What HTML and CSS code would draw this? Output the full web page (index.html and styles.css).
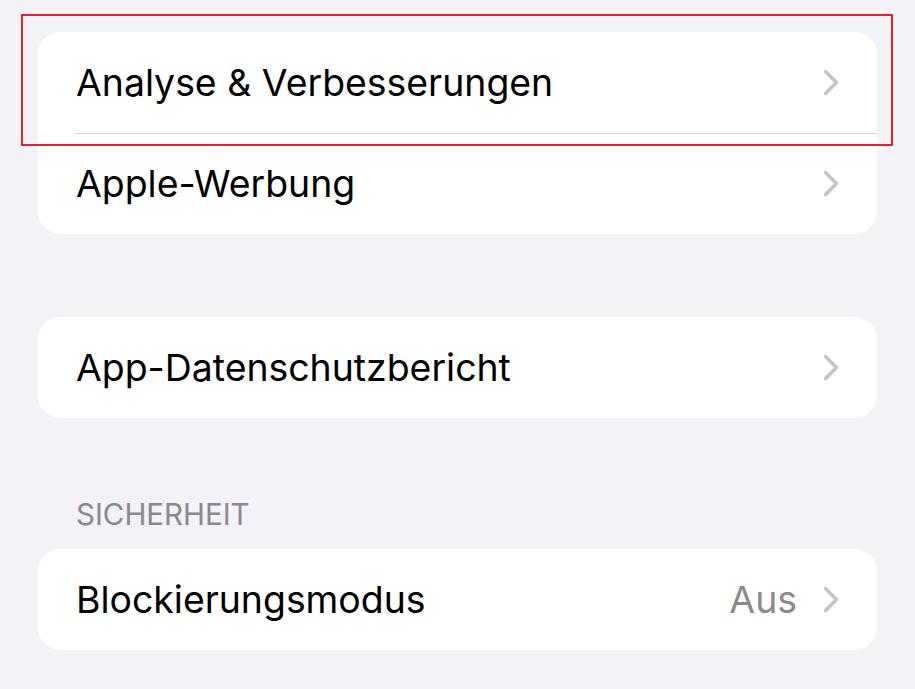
FILE: index.html
```html
<!DOCTYPE html>
<html lang="de">
<head>
  <meta charset="UTF-8" />
  <meta name="viewport" content="width=device-width, initial-scale=1.0" />
  <title>Datenschutz &amp; Sicherheit</title>
  <link rel="stylesheet" href="styles.css">
</head>
<body>
  <!-- Markierung um die erste Zeile -->
  <div class="highlight"></div>

  <div class="group">
    <div class="row">
      <span class="label">Analyse &amp; Verbesserungen</span>
      <svg class="chevron" viewBox="0 0 16 27"><path d="M2.5 2.5 L13.5 13.5 L2.5 24.5" /></svg>
    </div>
    <div class="row">
      <span class="label">Apple-Werbung</span>
      <svg class="chevron" viewBox="0 0 16 27"><path d="M2.5 2.5 L13.5 13.5 L2.5 24.5" /></svg>
    </div>
  </div>

  <div class="group">
    <div class="row">
      <span class="label">App-Datenschutzbericht</span>
      <svg class="chevron" viewBox="0 0 16 27"><path d="M2.5 2.5 L13.5 13.5 L2.5 24.5" /></svg>
    </div>
  </div>

  <div class="section-title">SICHERHEIT</div>
  <div class="group">
    <div class="row">
      <span class="label">Blockierungsmodus</span>
      <span class="value">Aus</span>
      <svg class="chevron" viewBox="0 0 16 27"><path d="M2.5 2.5 L13.5 13.5 L2.5 24.5" /></svg>
    </div>
  </div>
</body>
</html>
```

FILE: styles.css
```css
/* Grundlayout im Stil der iOS-Einstellungen */
body {
  margin: 0;
  padding: 32px 38px 0 38px;
  font-family: Inter, "Noto Sans", sans-serif;
  background-color: #f2f2f7;
  color: #000;
}

.group {
  background-color: #fff;
  border-radius: 22px;
  margin-bottom: 83px;
  overflow: hidden;
}

.group:last-child {
  margin-bottom: 0;
}

.row {
  display: flex;
  align-items: center;
  height: 101px;
  padding: 0 38px 0 38px;
  position: relative;
}

/* Trennlinie zwischen Zeilen, eingerückt wie bei iOS */
.row + .row::before {
  content: "";
  position: absolute;
  top: 0;
  left: 37px;
  right: 0;
  height: 1px;
  background-color: #d8d8dc;
}

.label {
  flex: 1;
  font-size: 37.4px;
}

.value {
  font-size: 37.4px;
  color: #8a8a8e;
  margin-right: 26px;
}

.chevron {
  width: 16px;
  height: 27px;
  fill: none;
  stroke: #c4c4c7;
  stroke-width: 3.4;
  stroke-linecap: round;
  stroke-linejoin: round;
}

.section-title {
  margin: -5px 0 17px 38px;
  font-size: 29.5px;
  color: #8a8a8e;
}

/* Rote Markierung (Screenshot-Annotation) */
.highlight {
  position: absolute;
  left: 21px;
  top: 14px;
  width: 868px;
  height: 128px;
  border: 2px solid #e3222b;
}
```
